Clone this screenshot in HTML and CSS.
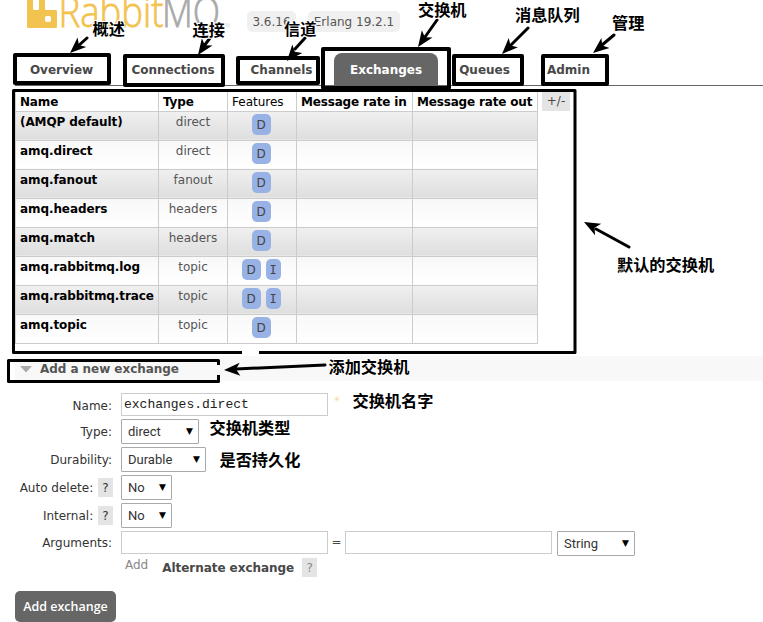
FILE: index.html
```html
<!DOCTYPE html>
<html lang="zh">
<head>
<meta charset="utf-8">
<title>RabbitMQ Management</title>
<link rel="stylesheet" href="styles.css">
</head>
<body>
<header class="top">
  <svg class="logo" width="218" height="34" viewBox="15 0 218 34">
    <path transform="translate(27 -2) scale(1.25)" fill="#f3c350" d="M23.035 9.601h-7.677a.956.956 0 01-.962-.962V.962a.956.956 0 00-.962-.956H10.56a.956.956 0 00-.962.956V8.64a.956.956 0 01-.962.962H5.762a.956.956 0 01-.961-.962V.962A.956.956 0 003.839 0H.959a.956.956 0 00-.956.962v22.076A.956.956 0 00.965 24h22.07a.956.956 0 00.962-.962V10.58a.956.956 0 00-.962-.98zm-3.86 8.152a1.437 1.437 0 01-1.437 1.443h-1.924a1.437 1.437 0 01-1.436-1.443v-1.917a1.437 1.437 0 011.436-1.443h1.924a1.437 1.437 0 011.437 1.443z"/>
    <text class="logo-a" x="58.500" y="27" textLength="105" lengthAdjust="spacingAndGlyphs">Rabbit</text>
    <text class="logo-b" x="162" y="27" textLength="58" lengthAdjust="spacingAndGlyphs">MQ</text>
    <text class="logo-tm" x="223" y="27">TM</text>
  </svg>
  <span class="version v1">3.6.16</span>
  <span class="version v2">Erlang 19.2.1</span>
</header>
<nav class="tabs">
  <a class="t1"><span>Overview</span></a>
  <a class="t2"><span>Connections</span></a>
  <a class="t3"><span>Channels</span></a>
  <a class="t4 active"><span>Exchanges</span></a>
  <a class="t5"><span>Queues</span></a>
  <a class="t6"><span>Admin</span></a>
</nav>
<main>
  <div class="listing">
    <table>
      <colgroup><col class="c1"><col class="c2"><col class="c3"><col class="c4"><col class="c5"></colgroup>
      <tr class="head"><th>Name</th><th>Type</th><th class="plain">Features</th><th>Message rate in</th><th>Message rate out</th></tr>
      <tr class="alt"><td>(AMQP default)</td><td>direct</td><td><i>D</i></td><td></td><td></td></tr>
      <tr><td>amq.direct</td><td>direct</td><td><i>D</i></td><td></td><td></td></tr>
      <tr class="alt"><td>amq.fanout</td><td>fanout</td><td><i>D</i></td><td></td><td></td></tr>
      <tr><td>amq.headers</td><td>headers</td><td><i>D</i></td><td></td><td></td></tr>
      <tr class="alt"><td>amq.match</td><td>headers</td><td><i>D</i></td><td></td><td></td></tr>
      <tr><td>amq.rabbitmq.log</td><td>topic</td><td><i>D</i><i class="serif">I</i></td><td></td><td></td></tr>
      <tr class="alt"><td>amq.rabbitmq.trace</td><td>topic</td><td><i>D</i><i class="serif">I</i></td><td></td><td></td></tr>
      <tr><td>amq.topic</td><td>topic</td><td><i>D</i></td><td></td><td></td></tr>
    </table>
    <span class="toggle">+/-</span>
  </div>
  <h2><svg width="12" height="7" viewBox="0 0 12 7"><path d="M0 0H12L6 6.5Z" fill="#aaa"/></svg><span>Add a new exchange</span></h2>
  <form>
    <div class="row name"><label>Name:</label><div class="input mono">exchanges.direct</div><span class="star">*</span></div>
    <div class="row"><label>Type:</label><div class="select w78"><span>direct</span><b>▼</b></div></div>
    <div class="row"><label>Durability:</label><div class="select w85"><span>Durable</span><b>▼</b></div></div>
    <div class="row"><label>Auto delete: <u>?</u></label><div class="select w51"><span>No</span><b>▼</b></div></div>
    <div class="row"><label>Internal: <u>?</u></label><div class="select w51"><span>No</span><b>▼</b></div></div>
    <div class="row args"><label>Arguments:</label><div class="input"></div><span class="eq">=</span><div class="input"></div><div class="select w78 last"><span>String</span><b>▼</b></div></div>
    <div class="hint"><span class="add">Add</span><strong>Alternate exchange</strong><u>?</u></div>
    <div class="button">Add exchange</div>
  </form>
</main>
<div class="notes">
  <svg width="763" height="622" viewBox="0 0 763 622">
    <defs><path id="tip" d="M0 0L-16 6.5L-12 0L-16 -6.5Z"/></defs>
    <g fill="none" stroke="#000" stroke-width="4" stroke-linejoin="round">
      <rect x="15" y="55" width="94" height="28"/>
      <rect x="125" y="56" width="98" height="29"/>
      <rect x="238" y="58" width="80" height="25"/>
      <rect x="323" y="49" width="126" height="39"/>
      <rect x="454" y="56" width="68" height="28"/>
      <rect x="543" y="56" width="64" height="28"/>
    </g>
    <g fill="none" stroke="#000" stroke-width="3" stroke-linejoin="round">
      <path d="M242 352.500H13.500V90.500H575V352.500H259"/>
      <path d="M218.500 365V360.500H8.500V381.500H218.500V375"/>
    </g>
    <g stroke="#000" stroke-width="3" stroke-linecap="round">
      <path d="M87 38L77 47M210 38L204 46M305 38L295 49M437 20L425 37M528 28L511 45M614 35L602 45M629 247L596 229M325 365L236 369"/>
    </g>
    <use href="#tip" transform="translate(70 53) rotate(138)"/>
    <use href="#tip" transform="translate(198 55) rotate(125)"/>
    <use href="#tip" transform="translate(287 61) rotate(130)"/>
    <use href="#tip" transform="translate(418 47) rotate(125)"/>
    <use href="#tip" transform="translate(502 54) rotate(135)"/>
    <use href="#tip" transform="translate(593 53) rotate(141)"/>
    <use href="#tip" transform="translate(584 222) rotate(208)"/>
    <use href="#tip" transform="translate(224 370) rotate(177)"/>
    <g class="cjk">
      <text x="92.500" y="35">概述</text>
      <text x="192.500" y="36">连接</text>
      <text x="284" y="35">信道</text>
      <text x="418" y="16">交换机</text>
      <text x="515" y="21">消息队列</text>
      <text x="612" y="29">管理</text>
      <text x="617" y="271">默认的交换机</text>
      <text x="328.500" y="373">添加交换机</text>
      <text x="352.500" y="407">交换机名字</text>
      <text x="209.500" y="434">交换机类型</text>
      <text x="219.500" y="466">是否持久化</text>
    </g>
  </svg>
</div>
</body>
</html>
```
FILE: styles.css
```css
* { box-sizing: border-box; }
body {
  margin: 0;
  width: 763px;
  height: 622px;
  overflow: hidden;
  position: relative;
  background: #fff;
  color: #484848;
  font: 12px/16px "DejaVu Sans", Verdana, sans-serif;
}
.top { display: flex; height: 52px; padding-left: 15px; }
.logo { flex: none; overflow: hidden; }
.logo text { font-family: "Open Sans", sans-serif; font-weight: 300; font-size: 43px; stroke-width: .8px; }
.logo .logo-a { fill: #f3c350; stroke: #f3c350; }
.logo .logo-b { fill: #a9a9a9; stroke: #a9a9a9; }
.logo .logo-tm { font-size: 5px; fill: #bbb; }
.version { height: 21px; margin-top: 11px; padding-top: 3px; text-align: center; background: #f0f0f0; border-radius: 5px; white-space: nowrap; color: #555; }
.v1 { width: 49px; margin-left: 14px; }
.v2 { width: 92px; margin-left: 12px; }
.tabs { display: flex; height: 34px; margin-left: 15px; border-bottom: 1px solid #666; font-weight: bold; }
.tabs a { height: 33px; padding-top: 10px; text-align: center; white-space: nowrap; flex: none; }
.t1 { width: 93px; }
.t2 { width: 130px; }
.t3 { width: 87px; }
.tabs .t4 { width: 104px; margin-left: 9px; }
.t5 { width: 93px; }
.t6 { width: 75px; }
.tabs .active { height: 32px; margin-top: 1px; padding-top: 9px; color: #fff; background: #666; border-radius: 8px 8px 0 0; }
.listing { display: flex; padding: 5px 0 0 15px; height: 270px; }
table { border-collapse: collapse; table-layout: fixed; width: 523px; height: 253px; flex: none; }
.c1 { width: 143px; } .c2 { width: 69px; } .c3 { width: 69px; } .c4 { width: 116px; } .c5 { width: 125px; }
th, td { border: 1px solid #ccc; padding: 0 4px; white-space: nowrap; }
.head { height: 20px; }
th { border-top: 0; color: #000; text-align: left; padding-top: 2px; letter-spacing: -.17px; }
th.plain { font-weight: normal; letter-spacing: 0; }
td { height: 29px; text-align: center; vertical-align: top; padding-top: 2px; background: linear-gradient(#f8f8f8, #fff); color: #555; }
.alt td { background: linear-gradient(#f0f0f0, #dedede); }
td:first-child { font-weight: bold; color: #000; text-align: left; letter-spacing: -.09px; }
td:nth-child(3) { padding: 2px 5px 0 3px; }
td i { display: inline-block; width: 19px; height: 21px; padding-top: 3px; margin: 0 2px; border-radius: 5px; background: #98b2e6; color: #444; font-style: normal; vertical-align: top; }
td .serif { width: 15px; margin-left: 3px; font-family: "DejaVu Sans Mono", monospace; }
.toggle { width: 28px; height: 19px; margin: 1px 0 0 4px; padding-top: 1px; background: #e4e4e4; text-align: center; }
h2 { display: flex; align-items: flex-start; gap: 8px; height: 25px; margin: 0 0 0 15px; padding: 5px 0 0 5px; background: #f8f8f8; font-size: 12px; line-height: 16px; letter-spacing: -.05px; color: #555; }
h2 svg { margin-top: 5px; }
form { padding: 12px 0 0 15px; }
.row { display: flex; height: 28px; }
.row.name { height: 26px; }
.row.args { height: 27px; }
label { width: 98px; padding: 5px 1px 0 0; text-align: right; white-space: nowrap; color: #333; flex: none; }
.input { width: 207px; height: 23px; margin-left: 8px; border: 1px solid #ccc; flex: none; }
.mono { padding: 3px 2px; font: 13px/16px "Liberation Mono", monospace; color: #222; }
.star { margin-left: 6px; color: #fadcae; }
.select { display: flex; justify-content: space-between; height: 25px; margin-left: 8px; padding: 4px 5px 0 6px; border: 1px solid #a9a9a9; border-radius: 1px; font: 13px/16px Roboto, sans-serif; color: #333; flex: none; }
.select b { font: 9px/15px "DejaVu Sans", sans-serif; color: #000; }
.w78 { width: 78px; } .w85 { width: 85px; } .w51 { width: 51px; }
.args .select { margin-left: 5px; }
.args label { padding-top: 4px; }
.eq { width: 17px; padding-top: 3px; text-align: center; }
.eq + .input { margin-left: 0; }
u { display: inline-block; width: 15px; height: 19px; margin: -2px -1px 0 1px; padding-top: 2px; background: #e4e4e4; text-align: center; text-decoration: none; }
.hint { display: flex; height: 33px; padding-left: 110px; color: #888; }
.hint .add { margin-top: -1px; }
.hint strong { margin: 2px 8px 0 14px; color: #484848; letter-spacing: -.05px; }
.hint u { margin: 0; }
.button { width: 101px; height: 31px; padding-top: 8px; border-radius: 5px; background: #666; color: #fff; font: 600 12.5px/16px "Open Sans", sans-serif; text-align: center; white-space: nowrap; }
.notes { position: absolute; inset: 0; pointer-events: none; }
.notes svg { display: block; }
.cjk { font: bold 16.2px "Noto Sans CJK SC", sans-serif; fill: #000; stroke: #fff; stroke-width: 2px; paint-order: stroke; }
```
